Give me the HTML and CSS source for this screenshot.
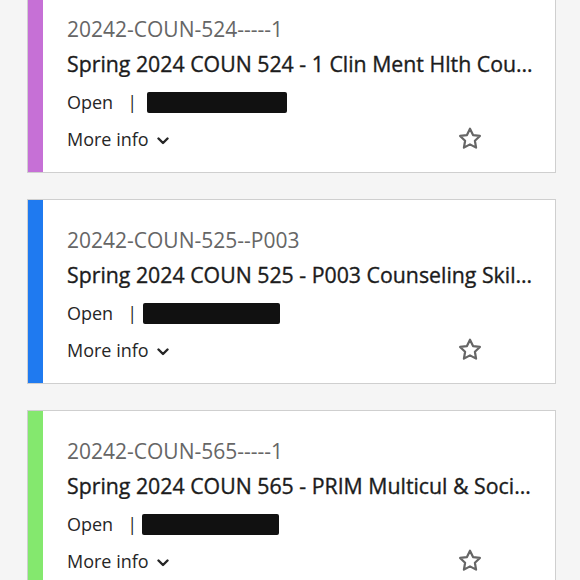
FILE: index.html
```html
<!DOCTYPE html>
<html lang="en">
<head>
<meta charset="utf-8">
<title>Courses</title>
<link rel="stylesheet" href="styles.css">
</head>
<body>
<main class="list">
  <article class="card card--purple">
    <div class="stripe"></div>
    <div class="body">
      <div class="cid">20242-COUN-524-----1</div>
      <div class="title">Spring 2024 COUN 524 - 1 Clin Ment Hlth Counseling</div>
      <div class="meta">
        <span class="status">Open</span>
        <span class="sep">|</span>
        <span class="redact redact--a"></span>
      </div>
      <div class="foot">
        <span class="more">More info
          <svg class="chev" viewBox="0 0 12 8" width="12" height="8"><path d="M1.5 1.5 6 6l4.5-4.5" fill="none" stroke="#262626" stroke-width="2.4" stroke-linecap="round" stroke-linejoin="round"/></svg>
        </span>
        <svg class="star" viewBox="0 0 24 24" width="28" height="28"><path d="M12 3.2l2.6 5.4 5.9.8-4.3 4.1 1 5.9L12 16.6l-5.2 2.8 1-5.9-4.3-4.1 5.9-.8z" fill="none" stroke="#666" stroke-width="1.9" stroke-linejoin="round"/></svg>
      </div>
    </div>
  </article>
  <article class="card card--blue">
    <div class="stripe"></div>
    <div class="body">
      <div class="cid">20242-COUN-525--P003</div>
      <div class="title">Spring 2024 COUN 525 - P003 Counseling Skills and Techniques</div>
      <div class="meta">
        <span class="status">Open</span>
        <span class="sep">|</span>
        <span class="redact redact--b"></span>
      </div>
      <div class="foot">
        <span class="more">More info
          <svg class="chev" viewBox="0 0 12 8" width="12" height="8"><path d="M1.5 1.5 6 6l4.5-4.5" fill="none" stroke="#262626" stroke-width="2.4" stroke-linecap="round" stroke-linejoin="round"/></svg>
        </span>
        <svg class="star" viewBox="0 0 24 24" width="28" height="28"><path d="M12 3.2l2.6 5.4 5.9.8-4.3 4.1 1 5.9L12 16.6l-5.2 2.8 1-5.9-4.3-4.1 5.9-.8z" fill="none" stroke="#666" stroke-width="1.9" stroke-linejoin="round"/></svg>
      </div>
    </div>
  </article>
  <article class="card card--green">
    <div class="stripe"></div>
    <div class="body">
      <div class="cid">20242-COUN-565-----1</div>
      <div class="title">Spring 2024 COUN 565 - PRIM Multicul &amp; Social Justice Counseling</div>
      <div class="meta">
        <span class="status">Open</span>
        <span class="sep">|</span>
        <span class="redact redact--c"></span>
      </div>
      <div class="foot">
        <span class="more">More info
          <svg class="chev" viewBox="0 0 12 8" width="12" height="8"><path d="M1.5 1.5 6 6l4.5-4.5" fill="none" stroke="#262626" stroke-width="2.4" stroke-linecap="round" stroke-linejoin="round"/></svg>
        </span>
        <svg class="star" viewBox="0 0 24 24" width="28" height="28"><path d="M12 3.2l2.6 5.4 5.9.8-4.3 4.1 1 5.9L12 16.6l-5.2 2.8 1-5.9-4.3-4.1 5.9-.8z" fill="none" stroke="#666" stroke-width="1.9" stroke-linejoin="round"/></svg>
      </div>
    </div>
  </article>
</main>
</body>
</html>
```
FILE: styles.css
```css
html, body {
  margin: 0;
  padding: 0;
  background: #f5f5f5;
  font-family: "Open Sans", "Noto Sans", sans-serif;
  color: #262626;
}
.list {
  display: flex;
  flex-direction: column;
  gap: 26px;
  margin-top: -12px;
  padding-left: 27px;
  width: 529px;
}
.card {
  display: flex;
  height: 185px;
  box-sizing: border-box;
  background: #fff;
  border: 1px solid #cfcfcf;
}
.stripe {
  width: 15px;
  flex: none;
}
.card--purple .stripe { background: #c670d6; }
.card--blue .stripe { background: #1f7af0; }
.card--green .stripe { background: #84e86e; }
.body {
  flex: 1;
  min-width: 0;
  padding: 27px 22px 0 24px;
  display: flex;
  flex-direction: column;
}
.cid {
  font-size: 21px;
  line-height: 26px;
  height: 26px;
  color: #666;
}
.title {
  margin-top: 9px;
  font-size: 21.3px;
  line-height: 26px;
  font-weight: 400;
  color: #1c1c1c;
  -webkit-text-stroke: 0.35px #1c1c1c;
  white-space: nowrap;
  overflow: hidden;
  text-overflow: ellipsis;
}
.meta {
  margin-top: 12px;
  display: flex;
  align-items: center;
  height: 26px;
  font-size: 18px;
}
.sep {
  margin-left: 14px;
  margin-right: 14px;
}
.redact {
  display: block;
  height: 21px;
  background: #111;
  border-radius: 2px;
}
.redact--a { width: 140px; margin-left: -4px; }
.redact--b { width: 137px; margin-left: -8px; }
.redact--c { width: 137px; margin-left: -9px; }
.foot {
  margin-top: 11px;
  display: flex;
  align-items: center;
  justify-content: space-between;
  height: 26px;
  font-size: 18px;
}
.more {
  display: flex;
  align-items: center;
  gap: 8px;
}
.chev { margin-top: 3px; }
.star { margin-right: 49px; }
```
